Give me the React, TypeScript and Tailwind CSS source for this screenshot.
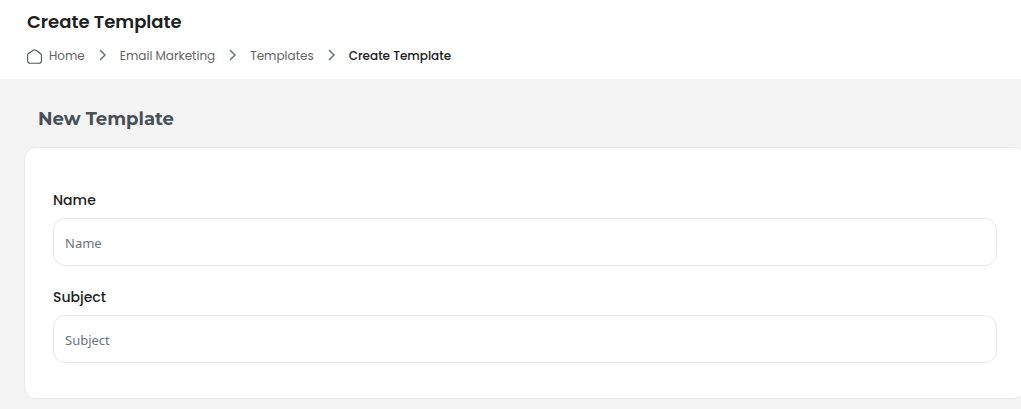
import { Fragment } from "react";

const crumbs = ["Home", "Email Marketing", "Templates"];

const fields = [
  { id: "name", label: "Name" },
  { id: "subject", label: "Subject" },
];

function HomeIcon() {
  return (
    <svg width="15" height="15" viewBox="0 0 15 15" fill="none" stroke="#4b5563" strokeWidth="1.1" strokeLinejoin="round">
      <path d="M.6 6.400c0-.8.3-1.400 1-1.900L6.200 1.200a2.200 2.200 0 0 1 2.600 0l4.600 3.300c.7.5 1 1.100 1 1.900v5.400a2.400 2.400 0 0 1-2.400 2.400H3A2.400 2.400 0 0 1 .6 11.800z" />
    </svg>
  );
}

function Chevron() {
  return (
    <svg width="7" height="12" viewBox="0 0 7 12" fill="none" stroke="#6b7280" strokeWidth="1.5" className="mb-[2px]">
      <path d="M1 1l5 5-5 5" />
    </svg>
  );
}

function PageHeader() {
  return (
    <header className="bg-white px-[27px] pt-2 pb-[11px]">
      <h1 className="text-lg leading-7 font-semibold text-[#212121]">Create Template</h1>
      <nav aria-label="Breadcrumb" className="mt-2 flex h-6 items-center gap-[14px] text-xs">
        {crumbs.map((crumb, i) => (
          <Fragment key={crumb}>
            <a href="#" className="flex items-center gap-[7px] text-[#666666]">
              {i === 0 && <HomeIcon />}
              {crumb}
            </a>
            <Chevron />
          </Fragment>
        ))}
        <span aria-current="page" className="font-medium text-[#212121]">Create Template</span>
      </nav>
    </header>
  );
}

function App() {
  return (
    <div className="min-h-screen overflow-x-hidden bg-[#f4f4f4] font-['Poppins','Inter',sans-serif]">
      <PageHeader />
      <main className="pt-[26px] pb-2 pl-6">
        <h2 className="mb-[14px] pl-[14px] text-lg leading-7 font-bold text-[#495057] font-['Montserrat','Inter',sans-serif]">
          New Template
        </h2>
        <form className="-mr-[5px] flex flex-col gap-[21px] rounded-xl border border-[#e8e8e8] bg-white px-7 pt-[42px] pb-[35px]">
          {fields.map((field) => (
            <div key={field.id} className="flex flex-col gap-[7px]">
              <label htmlFor={field.id} className="text-sm leading-[21px] font-medium text-[#212121]">
                {field.label}
              </label>
              <input
                id={field.id}
                type="text"
                placeholder={field.label}
                className="h-12 w-full rounded-xl border border-[#e8e8e8] bg-white px-[11px] pt-[2px] text-[13px] outline-none placeholder:text-[#6c757d] font-['Noto_Sans',sans-serif]"
              />
            </div>
          ))}
        </form>
      </main>
    </div>
  );
}

export default App;
